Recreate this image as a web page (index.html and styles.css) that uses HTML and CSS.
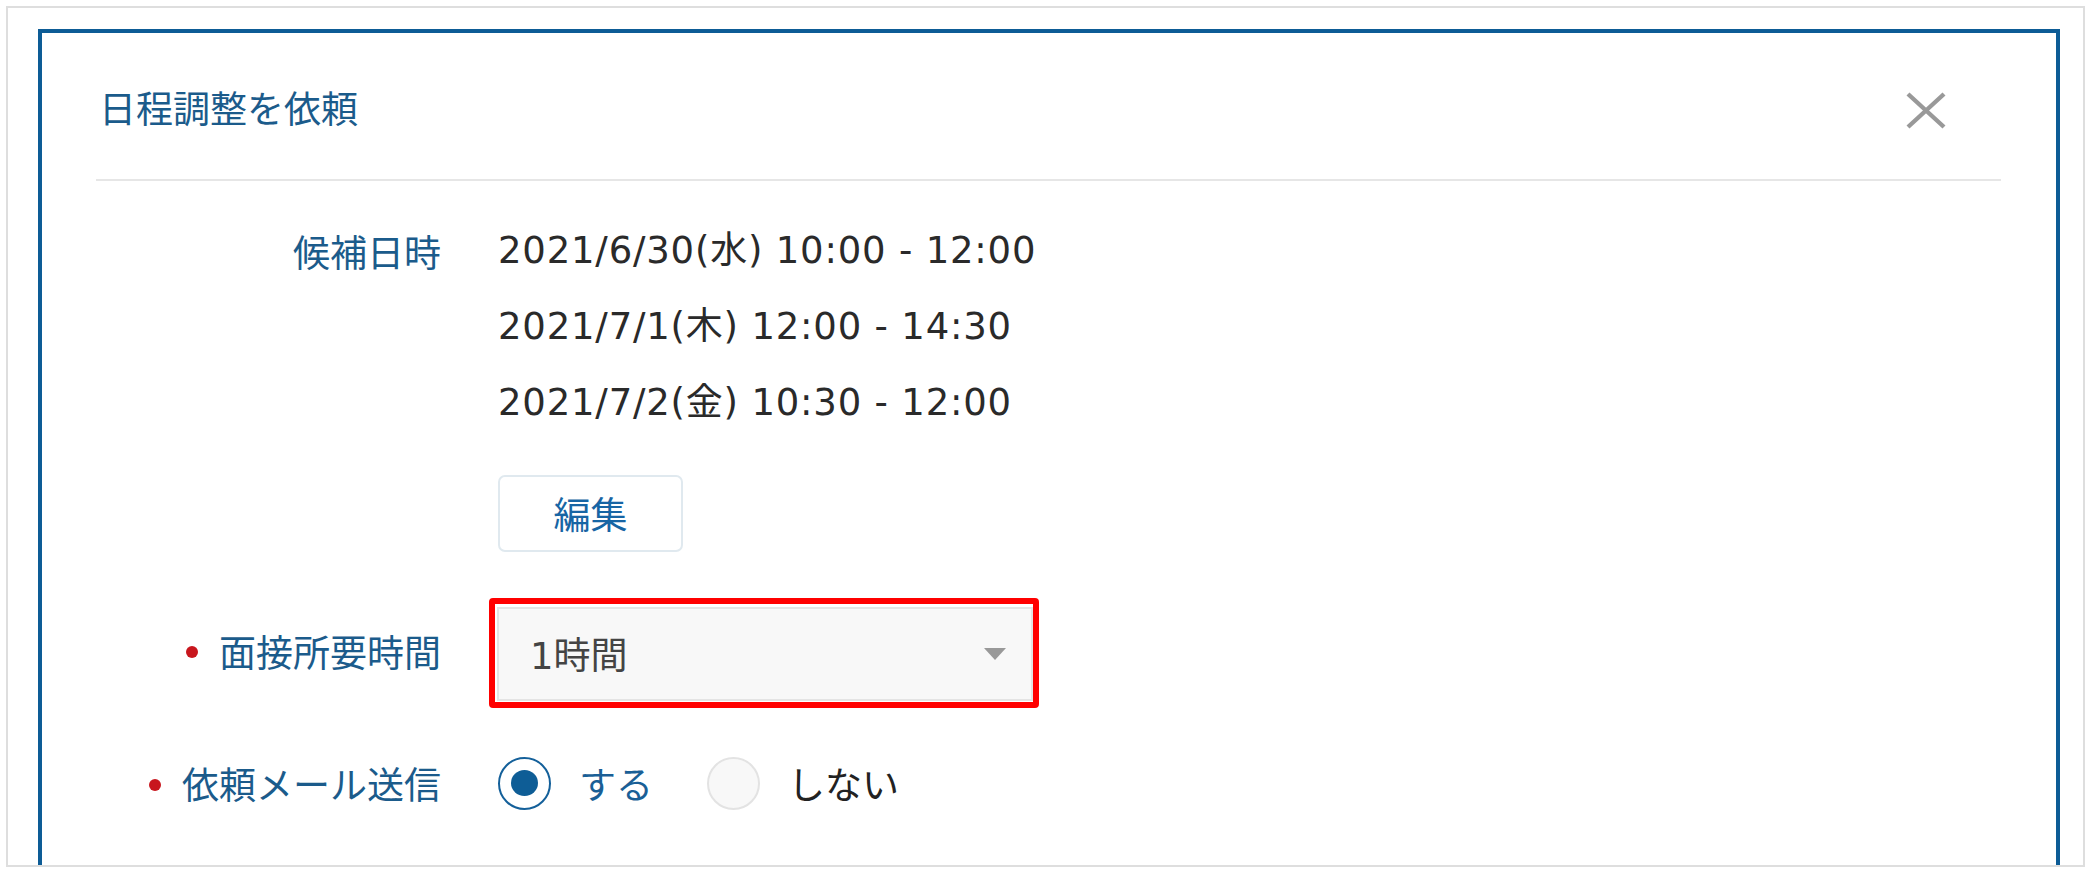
FILE: index.html
```html
<!DOCTYPE html>
<html lang="ja">
<head>
<meta charset="utf-8">
<title>日程調整を依頼</title>
<link rel="stylesheet" href="styles.css">
</head>
<body>
<div class="frame">
  <div class="modal">
    <div class="modal-header">
      <h1 class="modal-title">日程調整を依頼</h1>
      <button class="close-btn" type="button" aria-label="閉じる">
        <svg width="40" height="37" viewBox="0 0 40 37"><path d="M2 2 L38 35 M38 2 L2 35" stroke="#999999" stroke-width="4.4" fill="none"/></svg>
      </button>
    </div>
    <div class="modal-body">
      <div class="form-row row-dates">
        <div class="form-label">候補日時</div>
        <div class="form-value">
          <div class="date-line">2021/6/30(水) 10:00 - 12:00</div>
          <div class="date-line">2021/7/1(木) 12:00 - 14:30</div>
          <div class="date-line">2021/7/2(金) 10:30 - 12:00</div>
          <button class="edit-btn" type="button">編集</button>
        </div>
      </div>
      <div class="form-row row-select">
        <div class="form-label required label-shift">面接所要時間</div>
        <div class="form-value">
          <div class="select">
            <span class="select-text">1時間</span>
            <span class="select-arrow"></span>
            <span class="highlight"></span>
          </div>
        </div>
      </div>
      <div class="form-row row-radio">
        <div class="form-label required">依頼メール送信</div>
        <div class="form-value radios">
          <label class="radio-option">
            <span class="radio checked"><span class="radio-dot"></span></span>
            <span class="radio-text selected">する</span>
          </label>
          <label class="radio-option">
            <span class="radio"></span>
            <span class="radio-text">しない</span>
          </label>
        </div>
      </div>
    </div>
  </div>
</div>
</body>
</html>
```

FILE: styles.css
```css
html, body {
  margin: 0;
  padding: 0;
  background: #ffffff;
}

body {
  font-family: "Noto Sans CJK JP", "Noto Sans", sans-serif;
}

.frame {
  margin: 6px 13px 0 6px;
  height: 836px;
  border: 2px solid #dedede;
  background: #ffffff;
  padding: 21px 23px 0 30px;
  overflow: hidden;
  box-sizing: content-box;
}

.modal {
  border: 4px solid #0d5c96;
  border-bottom: none;
  height: 900px;
  padding: 0 55px 0 54px;
  background: #ffffff;
}

.modal-header {
  display: flex;
  align-items: center;
  justify-content: space-between;
  padding: 47px 0 45px;
  border-bottom: 2px solid #e6e6e6;
}

.modal-title {
  margin: 0 0 0 3px;
  font-size: 37px;
  font-weight: 400;
  line-height: 54px;
  color: #1b5b8b;
  letter-spacing: 0;
}

.close-btn {
  margin: 6px 55px 0 0;
  padding: 0;
  border: none;
  background: none;
  width: 40px;
  height: 37px;
  display: flex;
}

.modal-body {
  padding-top: 32px;
  display: flex;
  flex-direction: column;
  gap: 55px;
}

.form-row {
  display: grid;
  grid-template-columns: 345px 1fr;
  column-gap: 57px;
}

.row-select,
.row-radio {
  align-items: center;
}

.form-label {
  text-align: right;
  font-size: 37px;
  line-height: 76px;
  color: #1b5b8b;
  white-space: nowrap;
}

.row-select .form-label,
.row-radio .form-label {
  line-height: 54px;
}

.label-shift {
  margin-bottom: 7px;
}

.required::before {
  content: "";
  display: inline-block;
  width: 12px;
  height: 12px;
  border-radius: 50%;
  background: #c8161d;
  margin-right: 21px;
  vertical-align: middle;
  position: relative;
  top: -4px;
}

.form-value {
  min-width: 0;
}

.date-line {
  font-family: "DejaVu Sans", "Noto Sans CJK JP", sans-serif;
  font-size: 37px;
  line-height: 76px;
  letter-spacing: 0.8px;
  color: #2a2a2a;
  white-space: nowrap;
}

.edit-btn {
  margin-top: 34px;
  width: 185px;
  height: 77px;
  border: 2px solid #e0e9ef;
  border-radius: 7px;
  background: #ffffff;
  color: #1765a4;
  font-family: "Noto Sans CJK JP", sans-serif;
  font-size: 37px;
  line-height: 1;
  padding: 0;
  display: block;
}

.select {
  position: relative;
  margin-left: -1px;
  width: 536px;
  height: 94px;
  box-sizing: border-box;
  border: 2px solid #e4e4e4;
  background: #f8f8f8;
  display: flex;
  align-items: center;
  justify-content: space-between;
  padding: 6px 25px 0 31px;
}

.select-text {
  font-family: "DejaVu Sans", "Noto Sans CJK JP", sans-serif;
  font-size: 37px;
  line-height: 54px;
  color: #444444;
}

.select-arrow {
  width: 0;
  height: 0;
  border-left: 11px solid transparent;
  border-right: 11px solid transparent;
  border-top: 12px solid #999999;
  margin-top: -7px;
}

.highlight {
  position: absolute;
  top: -11px;
  left: -10px;
  right: -8px;
  bottom: -9px;
  border: 6px solid #ff0000;
  border-radius: 4px;
  pointer-events: none;
}

.radios {
  display: flex;
  align-items: center;
}

.radio-option {
  display: flex;
  align-items: center;
  margin-right: 54px;
}

.radio {
  width: 53px;
  height: 53px;
  box-sizing: border-box;
  border-radius: 50%;
  border: 2px solid #e3e3e3;
  background: #f8f8f8;
  display: flex;
  align-items: center;
  justify-content: center;
}

.radio.checked {
  border-color: #14609a;
  background: #ffffff;
}

.radio-dot {
  width: 27px;
  height: 26px;
  border-radius: 50%;
  background: #0e5d96;
}

.radio-text {
  margin-left: 28px;
  font-size: 37px;
  line-height: 54px;
  color: #222222;
}

.radio-text.selected {
  color: #1a5f96;
}
```
